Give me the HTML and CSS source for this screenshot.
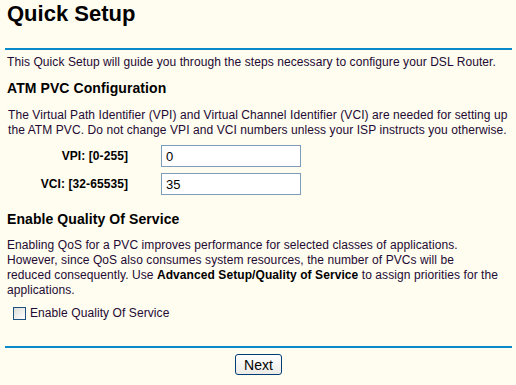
FILE: index.html
```html
<!DOCTYPE html>
<html lang="en">
<head>
  <meta charset="UTF-8">
  <title>Quick Setup</title>
  <link rel="stylesheet" href="styles.css">
</head>
<body>
  <div class="page">
    <h1 class="title">Quick Setup</h1>
    <div class="rule"></div>

    <p class="intro">This Quick Setup will guide you through the steps necessary to configure your DSL Router.</p>

    <h2 class="section-title">ATM PVC Configuration</h2>
    <p class="text indent">The Virtual Path Identifier (VPI) and Virtual Channel Identifier (VCI) are needed for setting up the ATM PVC. Do not change VPI and VCI numbers unless your ISP instructs you otherwise.</p>

    <div class="form-rows">
      <div class="form-row">
        <label class="form-label" for="vpi">VPI: [0-255]</label>
        <input type="text" id="vpi" class="input" value="0">
      </div>
      <div class="form-row">
        <label class="form-label" for="vci">VCI: [32-65535]</label>
        <input type="text" id="vci" class="input" value="35">
      </div>
    </div>

    <h2 class="section-title qos-title">Enable Quality Of Service</h2>
    <p class="text qos-text">Enabling QoS for a PVC improves performance for selected classes of applications. However, since QoS also consumes system resources, the number of PVCs will be reduced consequently. Use <b>Advanced Setup/Quality of Service</b> to assign priorities for the applications.</p>

    <label class="check-row">
      <input type="checkbox" id="enableQos" class="checkbox">
      <span>Enable Quality Of Service</span>
    </label>

    <div class="rule bottom-rule"></div>

    <div class="actions">
      <button class="button">Next</button>
    </div>
  </div>
</body>
</html>
```

FILE: styles.css
```css
* {
  margin: 0;
  padding: 0;
  box-sizing: border-box;
}

body {
  width: 516px;
  height: 385px;
  background: #fffcf0;
  font-family: "Liberation Sans", Arial, sans-serif;
  font-size: 12px;
  letter-spacing: 0.08px;
  color: #230a33;
  overflow: hidden;
}

.page {
  margin: 0 4px 0 5px;
}

.title {
  font-size: 22px;
  line-height: 26px;
  font-weight: bold;
  letter-spacing: 0;
  color: #000;
  padding: 1px 0 0 2px;
  margin-bottom: 21px;
}

.rule {
  height: 2px;
  background: #0a89c8;
}

.intro {
  line-height: 15px;
  padding-left: 2px;
  margin-top: 5px;
}

.section-title {
  font-size: 14px;
  line-height: 17px;
  font-weight: bold;
  color: #000;
  padding-left: 2px;
  margin-top: 10px;
}

.text {
  line-height: 15px;
  padding: 0 3px 0 2px;
  margin-top: 10px;
}

.text b {
  color: #000;
}

.indent {
  padding-left: 3px;
  padding-right: 1px;
  margin-top: 11px;
}

.qos-text {
  padding-right: 11px;
}

.form-rows {
  display: flex;
  flex-direction: column;
  gap: 6px;
  margin-top: 7px;
}

.form-row {
  display: flex;
  align-items: center;
}

.form-label {
  width: 123px;
  text-align: right;
  font-weight: bold;
  color: #000;
  margin-right: 33px;
}

.input {
  width: 140px;
  height: 22px;
  border: 1px solid #7f9db9;
  background: #fff;
  padding: 0 4px;
  font-family: inherit;
  font-size: 13px;
  color: #000;
}

.qos-title {
  margin-top: 16px;
}

.check-row {
  display: flex;
  align-items: center;
  gap: 4px;
  margin: 8px 0 0 8px;
}

.checkbox {
  appearance: none;
  width: 13px;
  height: 13px;
  border: 1px solid #1c5180;
  background: linear-gradient(135deg, #dcdcd7 0%, #fff 100%);
}

.bottom-rule {
  margin-top: 26px;
}

.actions {
  display: flex;
  justify-content: center;
  margin-top: 6px;
}

.button {
  width: 47px;
  height: 21px;
  border: 1px solid #003c74;
  border-radius: 3px;
  background: linear-gradient(#fff, #ecebe6);
  font-family: inherit;
  font-size: 14px;
  color: #000;
}
```
